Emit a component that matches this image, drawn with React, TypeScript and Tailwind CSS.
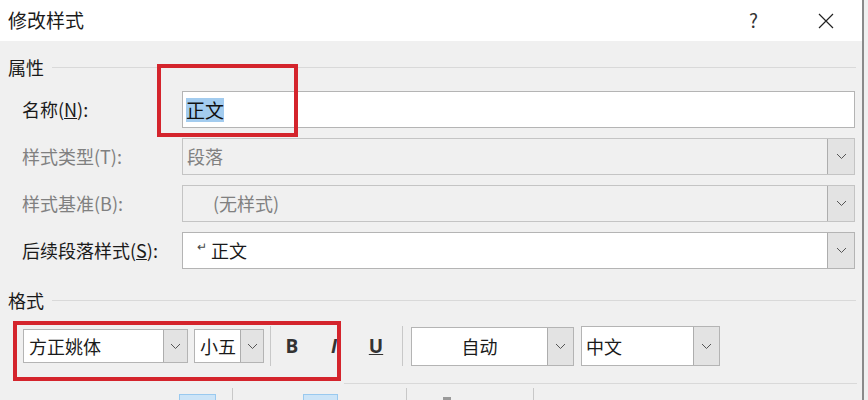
import React from "react";

const Chevron = () => (
  <svg width="11" height="7" viewBox="0 0 11 7" fill="none">
    <path d="M1 1l4.5 4.5L10 1" stroke="#555" strokeWidth="1" />
  </svg>
);

const DropBtn = ({ w = "w-[27px]" }: { w?: string }) => (
  <div className={`${w} h-full shrink-0 flex items-center justify-center bg-[#e3e3e3] border-l border-[#adadad]`}>
    <Chevron />
  </div>
);

const SectionHeader = ({ title, className = "" }: { title: string; className?: string }) => (
  <div className={`flex items-center h-[24px] ${className}`}>
    <span className="text-[18px] leading-[24px] text-[#1a1a1a]">{title}</span>
    <div className="ml-[8px] w-[804px] h-px bg-[#d9d9d9]" />
  </div>
);

const App = () => {
  return (
    <div
      className="relative w-[868px] h-[400px] overflow-hidden bg-[#f0f0f0]"
      style={{ fontFamily: '"Noto Sans CJK SC", "Noto Sans", sans-serif' }}
    >
      <div className="w-[864px] h-[400px] border-r-2 border-[#8a8a8a]">
        {/* title bar */}
        <div className="h-[41px] bg-white flex items-center pl-[8px]">
          <span className="text-[19px] text-[#1a1a1a]">修改样式</span>
          <span className="ml-[665px] text-[19px] text-[#333]">?</span>
          <svg className="ml-[60px]" width="16" height="16" viewBox="0 0 16 16">
            <path d="M1 1l14 14M15 1L1 15" stroke="#222" strokeWidth="1.2" />
          </svg>
        </div>

        <div className="pl-[8px]">
          <SectionHeader title="属性" className="mt-[14px]" />

          <div className="mt-[12px] flex flex-col gap-[10px]">
            <div className="flex items-center h-[37px]">
              <div className="w-[174px] pl-[14px] text-[18px] text-[#1a1a1a]">
                名称(<span className="underline">N</span>):
              </div>
              <div className="w-[673px] h-full bg-white border border-[#b4b4b4] flex items-center pl-[3px]">
                <span className="text-[19px] leading-[24px] bg-[#a3ccef] text-[#111]">正文</span>
              </div>
            </div>

            <div className="flex items-center h-[37px]">
              <div className="w-[174px] pl-[14px] text-[18px] text-[#808080]">样式类型(T):</div>
              <div className="w-[673px] h-full bg-[#f0f0f0] border border-[#c4c4c4] flex items-center">
                <span className="flex-1 pl-[4px] text-[18px] text-[#808080]">段落</span>
                <DropBtn />
              </div>
            </div>

            <div className="flex items-center h-[37px]">
              <div className="w-[174px] pl-[14px] text-[18px] text-[#808080]">样式基准(B):</div>
              <div className="w-[673px] h-full bg-[#f0f0f0] border border-[#c4c4c4] flex items-center">
                <span className="flex-1 pl-[30px] text-[18px] text-[#808080]">(无样式)</span>
                <DropBtn />
              </div>
            </div>

            <div className="flex items-center h-[37px]">
              <div className="w-[174px] pl-[14px] text-[18px] text-[#1a1a1a]">
                后续段落样式(<span className="underline">S</span>):
              </div>
              <div className="w-[673px] h-full bg-white border border-[#b4b4b4] flex items-center">
                <span className="flex-1 pl-[14px] text-[18px] text-[#1a1a1a]">
                  <span className="text-[12px] align-top text-[#444]">↵</span> 正文
                </span>
                <DropBtn />
              </div>
            </div>
          </div>

          <SectionHeader title="格式" className="mt-[19px]" />

          {/* toolbar */}
          <div className="mt-[13px] h-[42px] flex items-center">
            <div className="ml-[15px] w-[165px] h-[34px] bg-white border border-[#b4b4b4] flex items-center">
              <span className="flex-1 pl-[5px] text-[18px] text-[#1a1a1a]">方正姚体</span>
              <DropBtn w="w-[24px]" />
            </div>
            <div className="ml-[6px] w-[70px] h-[34px] bg-white border border-[#b4b4b4] flex items-center">
              <span className="flex-1 pl-[5px] text-[18px] text-[#1a1a1a]">小五</span>
              <DropBtn w="w-[23px]" />
            </div>
            <div className="ml-[6px] w-px h-[40px] bg-[#c8c8c8]" />
            <div className="w-[42px] text-center text-[19px] font-bold text-[#333]" style={{ fontFamily: '"Open Sans", sans-serif' }}>B</div>
            <div className="w-[42px] text-center text-[19px] italic font-bold text-[#333]" style={{ fontFamily: '"Open Sans", sans-serif' }}>I</div>
            <div className="w-[42px] text-center text-[19px] font-bold underline text-[#333]" style={{ fontFamily: '"Open Sans", sans-serif' }}>U</div>
            <div className="ml-[5px] w-px h-[40px] bg-[#c8c8c8]" />
            <div className="ml-[8px] w-[163px] h-[39px] bg-white border border-[#b4b4b4] flex items-center">
              <span className="flex-1 text-center text-[18px] text-[#1a1a1a]">自动</span>
              <DropBtn w="w-[26px]" />
            </div>
            <div className="ml-[7px] w-[139px] h-[40px] bg-white border border-[#b4b4b4] flex items-center">
              <span className="flex-1 pl-[4px] text-[18px] text-[#1a1a1a]">中文</span>
              <DropBtn w="w-[26px]" />
            </div>
          </div>

          <div className="mt-[16px] ml-[336px] w-[513px] h-px bg-[#d9d9d9]" />

          {/* next toolbar row (cut off) */}
          <div className="flex items-end h-[16px]">
            <div className="ml-[171px] w-[37px] h-[6px] bg-[#cce4f7] border border-[#99c9ef] border-b-0" />
            <div className="ml-[16px] w-px h-[12px] bg-[#c8c8c8]" />
            <div className="ml-[70px] w-[35px] h-[6px] bg-[#cce4f7] border border-[#99c9ef] border-b-0" />
            <div className="ml-[68px] w-px h-[12px] bg-[#c8c8c8]" />
            <div className="ml-[36px] w-[8px] h-[3px] bg-[#9a9a9a]" />
            <div className="ml-[82px] w-px h-[12px] bg-[#c8c8c8]" />
          </div>
        </div>
      </div>

      {/* red annotation boxes */}
      <div className="absolute left-[157px] top-[64px] w-[141px] h-[73px] border-4 border-[#d4242c]" />
      <div className="absolute left-[13px] top-[321px] w-[328px] h-[60px] border-4 border-[#d4242c]" />
    </div>
  );
};

export default App;
